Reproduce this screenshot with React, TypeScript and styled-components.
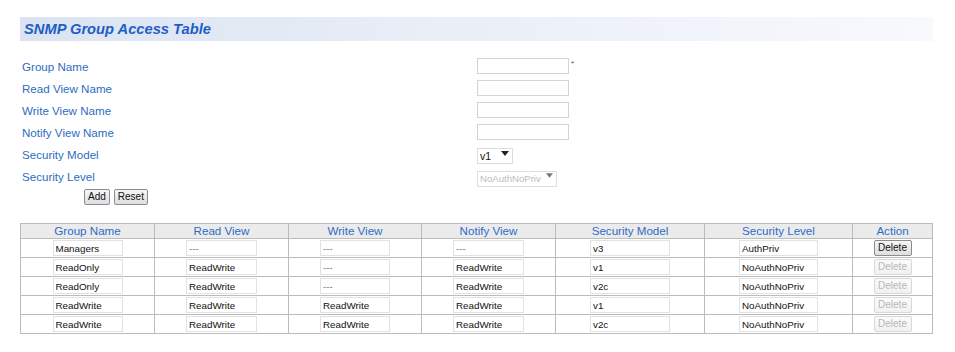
import React from "react";
import styled, { createGlobalStyle } from "styled-components";

const GlobalStyle = createGlobalStyle`
  html, body { margin: 0; padding: 0; background: #ffffff; }
  body { font-family: "Liberation Sans", Arial, sans-serif; }
`;

const Page = styled.div`
  padding: 17px 0 0 20px;
  width: 935px;
  box-sizing: border-box;
`;

const TitleBar = styled.div`
  width: 913px;
  height: 24px;
  box-sizing: border-box;
  padding-left: 4px;
  background: linear-gradient(to right, #dbe3f2 0%, #e9eef7 45%, #f8f9fd 100%);
  display: flex;
  align-items: center;
`;

const Title = styled.h1`
  margin: 0;
  font-size: 14.7px;
  font-weight: bold;
  font-style: italic;
  color: #1d5fc6;
`;

const Form = styled.div`
  margin-top: 14px;
  display: flex;
  flex-direction: column;
`;

const FormRow = styled.div`
  display: grid;
  grid-template-columns: 457px auto;
  align-items: center;
  height: 22px;
`;

const Label = styled.span`
  padding-left: 2px;
  font-size: 11.6px;
  color: #2e6cc0;
`;

const FieldWrap = styled.span`
  display: flex;
  align-items: flex-start;
`;

const TextInput = styled.input`
  width: 92px;
  height: 16px;
  box-sizing: border-box;
  border: 1px solid #d4d4d4;
  padding: 0 2px;
  margin: 0;
  font-family: "Liberation Sans", Arial, sans-serif;
  font-size: 10px;
  background: #fff;
  outline: none;
`;

const Required = styled.span`
  font-size: 8px;
  color: #555;
  margin-left: 2px;
  margin-top: 2px;
  line-height: 8px;
`;

const SelectWrap = styled.span<{ $w: number }>`
  position: relative;
  display: inline-block;
  width: ${(p) => p.$w}px;
  height: 16px;
`;

const Select = styled.select<{ $disabled?: boolean }>`
  appearance: none;
  -webkit-appearance: none;
  width: 100%;
  height: 16px;
  box-sizing: border-box;
  margin: 0;
  padding: 0 0 0 2px;
  border: 1px solid ${(p) => (p.$disabled ? "#cfcfcf" : "#dcdcdc")};
  background: #fff;
  font-family: "Liberation Sans", Arial, sans-serif;
  font-size: ${(p) => (p.$disabled ? "9.6px" : "10.5px")};
  color: ${(p) => (p.$disabled ? "#a0a0a0" : "#111")};
  outline: none;
`;

const Arrow = styled.svg`
  position: absolute;
  right: 4px;
  top: 5px;
  pointer-events: none;
`;

const ButtonRow = styled.div`
  margin-top: 2px;
  padding-left: 64px;
  display: flex;
  gap: 4px;
  height: 16px;
`;

const Button = styled.button<{ $disabled?: boolean }>`
  height: 16px;
  box-sizing: border-box;
  margin: 0;
  padding: 0 3px;
  font-family: "Liberation Sans", Arial, sans-serif;
  font-size: 10px;
  line-height: 14px;
  color: ${(p) => (p.$disabled ? "#b8b8b8" : "#111")};
  border: 1px solid ${(p) => (p.$disabled ? "#d8d8d8" : "#8c8c8c")};
  border-radius: 2px;
  background: ${(p) =>
    p.$disabled
      ? "linear-gradient(#fbfbfb, #f1f1f1)"
      : "linear-gradient(#f6f6f6, #dedede)"};
`;

const Table = styled.table`
  margin-top: 18px;
  border-collapse: collapse;
  table-layout: fixed;
  width: 912px;
  font-family: "Liberation Sans", Arial, sans-serif;
`;

const HeadCell = styled.th`
  height: 14px;
  padding: 0;
  border: 1px solid #bcbcbc;
  background: #ebebeb;
  color: #2e6cc8;
  font-weight: normal;
  font-size: 11.6px;
  line-height: 14px;
  text-align: center;
`;

const Cell = styled.td`
  height: 18px;
  padding: 0;
  border: 1px solid #bcbcbc;
  text-align: center;
  vertical-align: middle;
`;

const CellInput = styled.input<{ $w: number }>`
  width: ${(p) => p.$w}px;
  height: 16px;
  box-sizing: border-box;
  border: 1px solid #e2e2e2;
  padding: 0 2px;
  font-family: "Liberation Sans", Arial, sans-serif;
  font-size: 9.8px;
  color: #111;
  background: #fff;
  outline: none;
  display: block;
  margin: 0 auto;
`;

const DashInput = styled(CellInput)`
  color: #777;
`;

const DeleteButton = styled(Button)`
  width: 38px;
  padding: 0;
  display: block;
  margin: 0 auto;
`;

const Triangle = () => (
  <Arrow width="8" height="5" viewBox="0 0 8 5">
    <path d="M0 0 L8 0 L4 5 Z" fill="#222" />
  </Arrow>
);

const DimTriangle = () => (
  <Arrow width="7" height="5" viewBox="0 0 8 5">
    <path d="M0 0 L8 0 L4 5 Z" fill="#777" />
  </Arrow>
);

type Row = {
  group: string;
  read: string;
  write: string;
  notify: string;
  model: string;
  level: string;
  canDelete: boolean;
};

const rows: Row[] = [
  { group: "Managers", read: "---", write: "---", notify: "---", model: "v3", level: "AuthPriv", canDelete: true },
  { group: "ReadOnly", read: "ReadWrite", write: "---", notify: "ReadWrite", model: "v1", level: "NoAuthNoPriv", canDelete: false },
  { group: "ReadOnly", read: "ReadWrite", write: "---", notify: "ReadWrite", model: "v2c", level: "NoAuthNoPriv", canDelete: false },
  { group: "ReadWrite", read: "ReadWrite", write: "ReadWrite", notify: "ReadWrite", model: "v1", level: "NoAuthNoPriv", canDelete: false },
  { group: "ReadWrite", read: "ReadWrite", write: "ReadWrite", notify: "ReadWrite", model: "v2c", level: "NoAuthNoPriv", canDelete: false },
];

const ValueInput = ({ v, w }: { v: string; w: number }) =>
  v === "---" ? (
    <DashInput $w={w} readOnly defaultValue={v} />
  ) : (
    <CellInput $w={w} readOnly defaultValue={v} />
  );

export default function App() {
  return (
    <>
      <GlobalStyle />
      <Page>
        <TitleBar>
          <Title>SNMP Group Access Table</Title>
        </TitleBar>
        <Form>
          <FormRow>
            <Label>Group Name</Label>
            <FieldWrap>
              <TextInput />
              <Required>*</Required>
            </FieldWrap>
          </FormRow>
          <FormRow>
            <Label>Read View Name</Label>
            <FieldWrap>
              <TextInput />
            </FieldWrap>
          </FormRow>
          <FormRow>
            <Label>Write View Name</Label>
            <FieldWrap>
              <TextInput />
            </FieldWrap>
          </FormRow>
          <FormRow>
            <Label>Notify View Name</Label>
            <FieldWrap>
              <TextInput />
            </FieldWrap>
          </FormRow>
          <FormRow>
            <Label>Security Model</Label>
            <FieldWrap>
              <SelectWrap $w={36}>
                <Select defaultValue="v1">
                  <option value="v1">v1</option>
                  <option value="v2c">v2c</option>
                  <option value="v3">v3</option>
                </Select>
                <Triangle />
              </SelectWrap>
            </FieldWrap>
          </FormRow>
          <FormRow>
            <Label>Security Level</Label>
            <FieldWrap>
              <SelectWrap $w={80}>
                <Select $disabled disabled defaultValue="NoAuthNoPriv">
                  <option value="NoAuthNoPriv">NoAuthNoPriv</option>
                  <option value="AuthNoPriv">AuthNoPriv</option>
                  <option value="AuthPriv">AuthPriv</option>
                </Select>
                <DimTriangle />
              </SelectWrap>
            </FieldWrap>
          </FormRow>
        </Form>
        <ButtonRow>
          <Button>Add</Button>
          <Button>Reset</Button>
        </ButtonRow>
        <Table>
          <colgroup>
            <col style={{ width: 134 }} />
            <col style={{ width: 134 }} />
            <col style={{ width: 133 }} />
            <col style={{ width: 134 }} />
            <col style={{ width: 149 }} />
            <col style={{ width: 148 }} />
            <col style={{ width: 80 }} />
          </colgroup>
          <thead>
            <tr>
              <HeadCell>Group Name</HeadCell>
              <HeadCell>Read View</HeadCell>
              <HeadCell>Write View</HeadCell>
              <HeadCell>Notify View</HeadCell>
              <HeadCell>Security Model</HeadCell>
              <HeadCell>Security Level</HeadCell>
              <HeadCell>Action</HeadCell>
            </tr>
          </thead>
          <tbody>
            {rows.map((r, i) => (
              <tr key={i}>
                <Cell><ValueInput v={r.group} w={70} /></Cell>
                <Cell><ValueInput v={r.read} w={71} /></Cell>
                <Cell><ValueInput v={r.write} w={70} /></Cell>
                <Cell><ValueInput v={r.notify} w={71} /></Cell>
                <Cell><ValueInput v={r.model} w={80} /></Cell>
                <Cell><ValueInput v={r.level} w={79} /></Cell>
                <Cell>
                  <DeleteButton $disabled={!r.canDelete} disabled={!r.canDelete}>
                    Delete
                  </DeleteButton>
                </Cell>
              </tr>
            ))}
          </tbody>
        </Table>
      </Page>
    </>
  );
}
